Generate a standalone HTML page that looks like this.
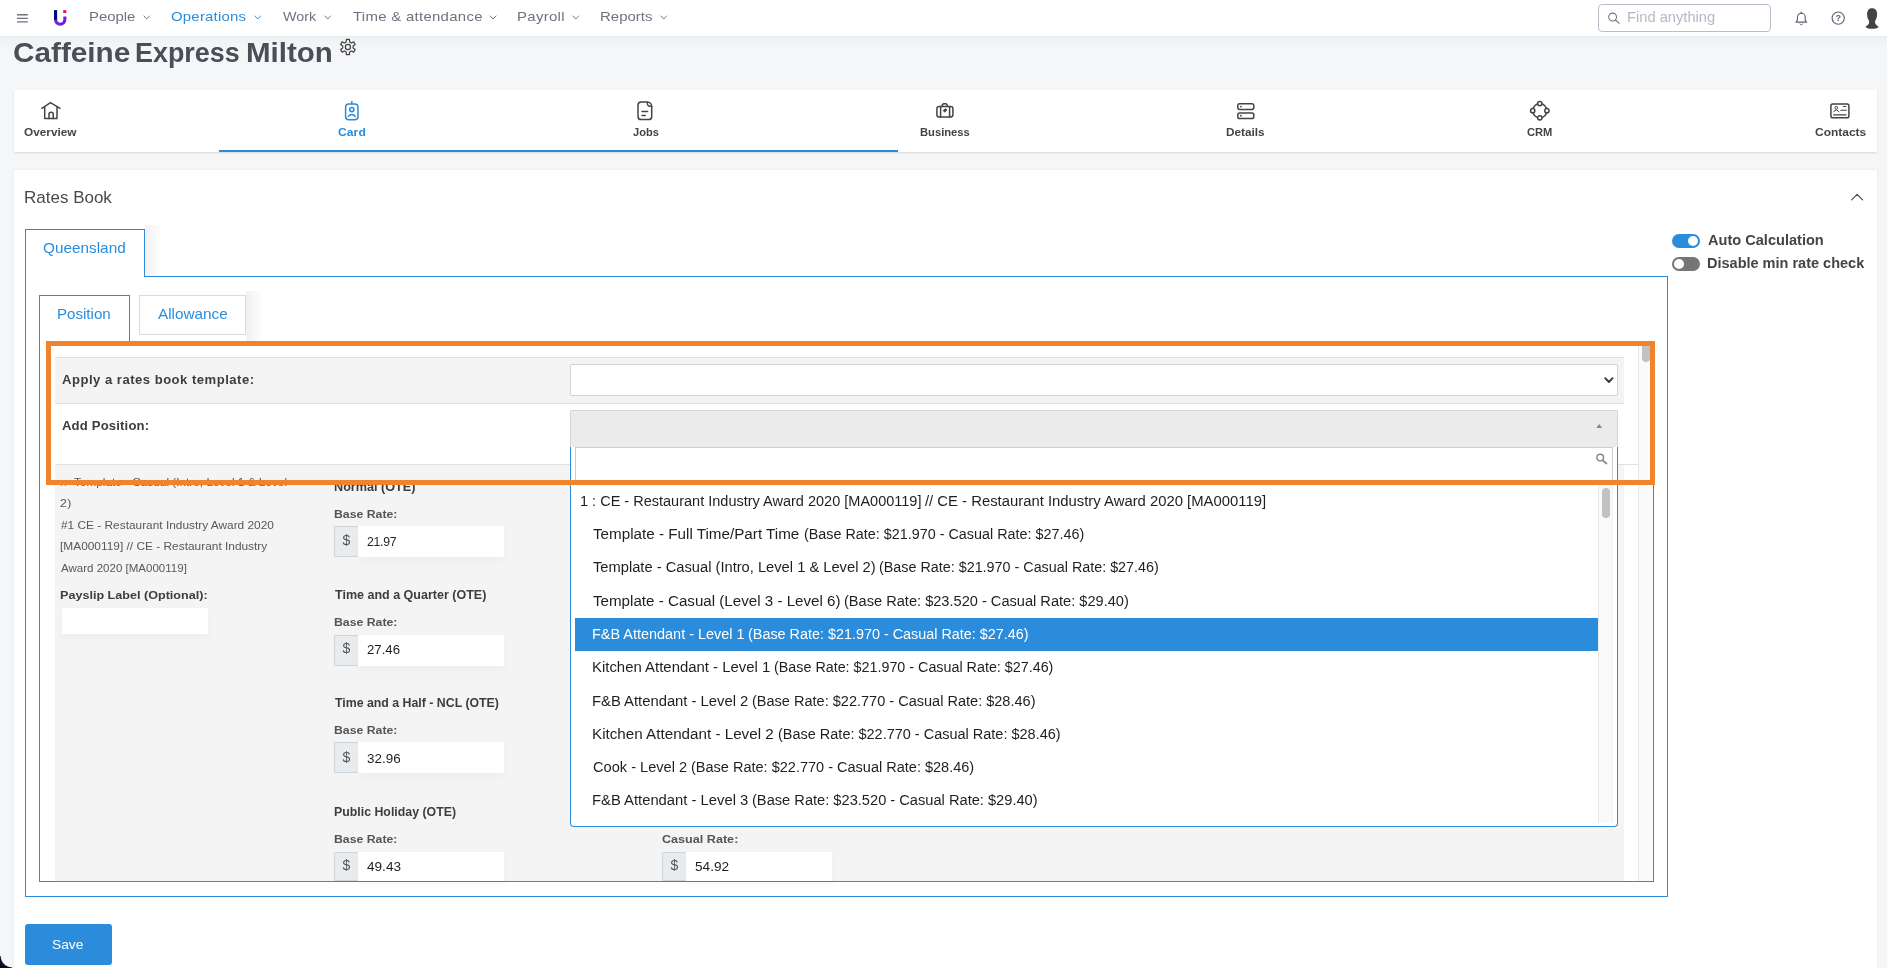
<!DOCTYPE html><html lang="en"><head><meta charset="utf-8"><title>Caffeine Express Milton - Rates Book</title><style>
html,body{margin:0;padding:0;width:1887px;height:968px;overflow:hidden}
body{width:1887px;height:968px;overflow:hidden;position:relative;background:#f5f6f8;font-family:"Liberation Sans",sans-serif;}
#app{position:absolute;left:0;top:0;width:1887px;height:968px;overflow:hidden;will-change:transform}
.a{position:absolute}
.t{position:absolute;white-space:nowrap;line-height:1;font-weight:400;transform-origin:0 0}
.nav{background:#fff;border-bottom:1px solid #e7edef;box-sizing:content-box}
.search{border:1px solid #b9bdc9;border-radius:4px;background:#fff;box-sizing:border-box}
.tabcard{background:#fff;box-shadow:0 1px 2px rgba(0,0,0,.12)}
.card{background:#fff;box-shadow:0 0 2px rgba(0,0,0,.08)}
.tog{width:28px;height:14px;border-radius:7px}
.tog i{position:absolute;top:1.8px;width:10.4px;height:10.4px;border-radius:50%;background:#fff}
.inp{background:#fff;box-shadow:0 4px 8px rgba(0,0,0,.03)}
.addon{background:#e9ecef;border:1px solid #ced4da;border-right:none;border-radius:2px 0 0 2px;box-sizing:border-box}
</style></head><body><div id="app"><div class="a" style="left:0;top:37px;width:1887px;height:12px;background:linear-gradient(#eef1f3,#f5f6f8)"></div>
<nav class="a nav" style="left:0;top:0;width:1887px;height:36px"><svg class="a" style="left:15px;top:12px" width="16" height="13" viewBox="15 12 16 13" ><path d="M17 14.7H27.8M17 18.3H27.8M17 21.9H27.8" stroke="#6b7280" stroke-width="1.35" fill="none"/></svg><svg class="a" style="left:52px;top:8px" width="18" height="20" viewBox="52 8 18 20" ><path d="M55.55 16 V19.6 A4.65 4.65 0 0 0 64.85 19.6 V16.5" fill="none" stroke="#6a22e0" stroke-width="3.1"/><rect x="54" y="10.1" width="3.1" height="9.6" fill="#05057a"/><rect x="63.2" y="10.1" width="3.1" height="2.9" fill="#e3126f"/></svg><span class="t" id="t0" style="left:89.28px;top:10.00px;font-size:13.6px;color:#6b7280;transform:scaleX(1.0958);">People</span><svg class="a" style="left:142px;top:14px" width="9.5" height="7" viewBox="142 14 9.5 7" ><path d="M144 16 L146.75 19 L149.5 16" fill="none" stroke="#6b7280" stroke-width="0.95" stroke-linecap="round" stroke-linejoin="round"/></svg><span class="t" id="t1" style="left:171.29px;top:10.00px;font-size:13.6px;color:#2a8cdb;letter-spacing:0.187px;transform:scaleX(1.1000);">Operations</span><svg class="a" style="left:253px;top:14px" width="9.5" height="7" viewBox="253 14 9.5 7" ><path d="M255 16 L257.75 19 L260.5 16" fill="none" stroke="#2a8cdb" stroke-width="0.95" stroke-linecap="round" stroke-linejoin="round"/></svg><span class="t" id="t2" style="left:282.94px;top:10.00px;font-size:13.6px;color:#6b7280;transform:scaleX(1.0500);">Work</span><svg class="a" style="left:322.75px;top:14px" width="9.5" height="7" viewBox="322.75 14 9.5 7" ><path d="M324.75 16 L327.5 19 L330.25 16" fill="none" stroke="#6b7280" stroke-width="0.95" stroke-linecap="round" stroke-linejoin="round"/></svg><span class="t" id="t3" style="left:352.66px;top:10.00px;font-size:13.6px;color:#6b7280;letter-spacing:0.257px;transform:scaleX(1.1000);">Time &amp; attendance</span><svg class="a" style="left:488px;top:14px" width="10" height="7" viewBox="488 14 10 7" ><path d="M490 16 L493 19 L496 16" fill="none" stroke="#6b7280" stroke-width="0.95" stroke-linecap="round" stroke-linejoin="round"/></svg><span class="t" id="t4" style="left:517.27px;top:10.00px;font-size:13.6px;color:#6b7280;letter-spacing:0.274px;transform:scaleX(1.1000);">Payroll</span><svg class="a" style="left:571px;top:14px" width="9.6" height="7" viewBox="571 14 9.6 7" ><path d="M573 16 L575.8 19 L578.6 16" fill="none" stroke="#6b7280" stroke-width="0.95" stroke-linecap="round" stroke-linejoin="round"/></svg><span class="t" id="t5" style="left:599.77px;top:10.00px;font-size:13.6px;color:#6b7280;letter-spacing:0.015px;transform:scaleX(1.1000);">Reports</span><svg class="a" style="left:659px;top:14px" width="9.5" height="7" viewBox="659 14 9.5 7" ><path d="M661 16 L663.75 19 L666.5 16" fill="none" stroke="#6b7280" stroke-width="0.95" stroke-linecap="round" stroke-linejoin="round"/></svg><div class="a search" style="left:1598px;top:4px;width:173px;height:28px"></div><svg class="a" style="left:1606px;top:10px" width="16" height="16" viewBox="1606 10 16 16" ><circle cx="1612.6" cy="17" r="3.9" fill="none" stroke="#6b7280" stroke-width="1.05"/><path d="M1615.5 20 L1619.2 23.3" stroke="#6b7280" stroke-width="1.1" stroke-linecap="round"/></svg><span class="t" id="t6" style="left:1626.80px;top:10.00px;font-size:14px;color:#b4b8c5;transform:scaleX(1.0486);">Find anything</span><svg class="a" style="left:1793px;top:9px" width="16" height="18" viewBox="1793 9 16 18" ><path d="M1796 22.1 H1806.6 L1805.2 20.2 V17.2 A3.9 3.9 0 0 0 1797.4 17.2 V20.2 Z" fill="none" stroke="#5a6472" stroke-width="1.1" stroke-linejoin="round"/><path d="M1801.3 13.3 V12.2" stroke="#5a6472" stroke-width="1.2" stroke-linecap="round"/><path d="M1799.8 23.6 A1.6 1.6 0 0 0 1802.8 23.6" fill="none" stroke="#5a6472" stroke-width="1"/></svg><svg class="a" style="left:1829px;top:9px" width="18" height="18" viewBox="1829 9 18 18" ><circle cx="1838.2" cy="18.1" r="6.1" fill="none" stroke="#5a6472" stroke-width="1.1"/><text x="1838.2" y="21.4" font-size="9" font-weight="700" text-anchor="middle" fill="#5a6472" font-family="Liberation Sans, sans-serif">?</text></svg><svg class="a" style="left:1862px;top:6px" width="20" height="25" viewBox="1862 6 20 25" ><path d="M1872 8.3 C1875.6 8.3 1877.3 11 1877.1 14.6 C1877 17.6 1876.2 19.6 1875.1 20.9 C1874.9 22.6 1875.3 24 1876.6 25.2 C1877.4 25.9 1878.4 26.3 1878.8 26.9 C1877.5 28.2 1874.8 28.8 1872 28.8 C1869.4 28.8 1866.8 28.2 1865.4 26.9 C1865.9 26.2 1867 25.8 1867.8 25 C1869 23.9 1869.3 22.6 1869.1 20.9 C1867.9 19.5 1867.2 17.4 1867.1 14.6 C1867 11 1868.6 8.3 1872 8.3 Z" fill="#424347"/></svg></nav>
<h1 class="a" style="left:0;top:0;margin:0;font-size:inherit"><span class="t" id="t7" style="left:13.03px;top:39.00px;font-size:27.2px;color:#4a4f57;font-weight:700;transform:scaleX(1.0929);">Caffeine</span> <span class="t" id="t8" style="left:135.20px;top:39.00px;font-size:27.2px;color:#4a4f57;font-weight:700;transform:scaleX(0.9890);">Express</span> <span class="t" id="t9" style="left:245.53px;top:39.00px;font-size:27.2px;color:#4a4f57;font-weight:700;transform:scaleX(1.0846);">Milton</span></h1>
<svg class="a" style="left:338px;top:37px" width="20" height="20" viewBox="338 37 20 20" ><path d="M346.18 41.99 L346.37 39.45 L349.43 39.45 L349.62 41.99 L351.38 43.01 L353.67 41.90 L355.20 44.55 L353.10 45.98 L353.10 48.02 L355.20 49.45 L353.67 52.10 L351.38 50.99 L349.62 52.01 L349.43 54.55 L346.37 54.55 L346.18 52.01 L344.42 50.99 L342.13 52.10 L340.60 49.45 L342.70 48.02 L342.70 45.98 L340.60 44.55 L342.13 41.90 L344.42 43.01 Z" fill="none" stroke="#444" stroke-width="1.25" stroke-linejoin="round"/><circle cx="347.9" cy="47" r="2.55" fill="none" stroke="#444" stroke-width="1.25"/></svg>
<div class="a tabcard" style="left:14px;top:90px;width:1863px;height:62px"></div>
<div class="a" style="left:219px;top:150px;width:679px;height:2px;background:#2a8cdb"></div>
<div class="a" style="left:0;top:0"><svg class="a" style="left:39px;top:100px" width="24" height="22" viewBox="39 100 24 22" ><path d="M41.8 108.3 L50.5 102.6 L60 108.3" fill="none" stroke="#444" stroke-width="1.5" stroke-linejoin="round" stroke-linecap="round"/><path d="M44.7 107 V118.6 H57 V107" fill="none" stroke="#444" stroke-width="1.5" stroke-linejoin="round" stroke-linecap="round"/><path d="M49 118.6 V114.3 A2.1 2.1 0 0 1 53.2 114.3 V118.6" fill="none" stroke="#444" stroke-width="1.5" stroke-linejoin="round" stroke-linecap="round"/></svg><span class="t" id="t10" style="left:24.17px;top:127.00px;font-size:11px;color:#444;font-weight:700;transform:scaleX(1.0734);">Overview</span><svg class="a" style="left:342px;top:99px" width="20" height="24" viewBox="342 99 20 24" ><rect x="345.6" y="104" width="12.4" height="15.7" rx="3.2" fill="none" stroke="#2a8cdb" stroke-width="1.5" stroke-linejoin="round" stroke-linecap="round"/><path d="M351.8 101.5 V104" fill="none" stroke="#2a8cdb" stroke-width="1.5" stroke-linejoin="round" stroke-linecap="round"/><circle cx="351.8" cy="109.6" r="2.1" fill="none" stroke="#2a8cdb" stroke-width="1.5" stroke-linejoin="round" stroke-linecap="round"/><path d="M348.4 116.4 A4 4 0 0 1 355.2 116.4" fill="none" stroke="#2a8cdb" stroke-width="1.5" stroke-linejoin="round" stroke-linecap="round"/></svg><span class="t" id="t11" style="left:337.90px;top:127.00px;font-size:11px;color:#2a8cdb;font-weight:700;letter-spacing:0.068px;transform:scaleX(1.1000);">Card</span><svg class="a" style="left:635px;top:99px" width="20" height="24" viewBox="635 99 20 24" ><path d="M641 102 H647.2 A4.5 4.5 0 0 1 651.7 106.5 V116.4 A3.2 3.2 0 0 1 648.5 119.6 H641.2 A3.2 3.2 0 0 1 638 116.4 V105.2 A3.2 3.2 0 0 1 641 102 Z" fill="none" stroke="#444" stroke-width="1.5" stroke-linejoin="round" stroke-linecap="round"/><path d="M647.4 102.2 V103.8 A2.4 2.4 0 0 0 649.8 106.2 H651.6" fill="none" stroke="#444" stroke-width="1.5" stroke-linejoin="round" stroke-linecap="round"/><path d="M642 111.5 H647.6 M642 115.4 H645.2" fill="none" stroke="#444" stroke-width="1.5" stroke-linejoin="round" stroke-linecap="round"/></svg><span class="t" id="t12" style="left:632.53px;top:127.00px;font-size:11px;color:#444;font-weight:700;transform:scaleX(1.0092);">Jobs</span><svg class="a" style="left:934px;top:100px" width="22" height="20" viewBox="934 100 22 20" ><rect x="936.9" y="106.6" width="16" height="10.4" rx="2.2" fill="none" stroke="#444" stroke-width="1.5" stroke-linejoin="round" stroke-linecap="round"/><path d="M941.8 106.4 L942.6 104.6 A1.4 1.4 0 0 1 943.9 103.8 H945.6 A1.4 1.4 0 0 1 946.9 104.6 L947.6 106.4" fill="none" stroke="#444" stroke-width="1.5" stroke-linejoin="round" stroke-linecap="round"/><path d="M940.6 106.8 V117 M949.6 106.8 V117" fill="none" stroke="#444" stroke-width="1.5" stroke-linejoin="round" stroke-linecap="round"/><path d="M943.2 110.6 L945.6 108.6 L947 110 L944.6 112.2 Z" fill="#444" stroke="#444" stroke-width="0.8" stroke-linejoin="round"/></svg><span class="t" id="t13" style="left:919.85px;top:127.00px;font-size:11px;color:#444;font-weight:700;transform:scaleX(1.0181);">Business</span><svg class="a" style="left:1235px;top:100px" width="22" height="22" viewBox="1235 100 22 22" ><rect x="1237.8" y="103.8" width="16" height="5.6" rx="1.8" fill="none" stroke="#444" stroke-width="1.5" stroke-linejoin="round" stroke-linecap="round"/><rect x="1237.8" y="112.9" width="16" height="5.6" rx="1.8" fill="none" stroke="#444" stroke-width="1.5" stroke-linejoin="round" stroke-linecap="round"/><circle cx="1240.9" cy="106.6" r="0.9" fill="#444"/><circle cx="1240.9" cy="115.7" r="0.9" fill="#444"/></svg><span class="t" id="t14" style="left:1226.21px;top:127.00px;font-size:11px;color:#444;font-weight:700;transform:scaleX(1.0690);">Details</span><svg class="a" style="left:1527px;top:98px" width="26" height="26" viewBox="1527 98 26 26" ><circle cx="1539.8" cy="110.7" r="7.1" fill="none" stroke="#444" stroke-width="1.5" stroke-linejoin="round" stroke-linecap="round"/><g fill="#fff" stroke="#444" stroke-width="1.5"><circle cx="1539.8" cy="103.6" r="2.15"/><circle cx="1539.8" cy="117.8" r="2.15"/><circle cx="1532.7" cy="110.7" r="2.15"/><circle cx="1546.9" cy="110.7" r="2.15"/></g></svg><span class="t" id="t15" style="left:1527.44px;top:127.00px;font-size:11px;color:#444;font-weight:700;transform:scaleX(1.0136);">CRM</span><svg class="a" style="left:1828px;top:100px" width="24" height="22" viewBox="1828 100 24 22" ><rect x="1830.9" y="104" width="18" height="13.8" rx="1.8" fill="none" stroke="#444" stroke-width="1.5" stroke-linejoin="round" stroke-linecap="round"/><circle cx="1836.3" cy="107.8" r="1.4" fill="none" stroke="#444" stroke-width="1"/><path d="M1833.7 111.8 A2.8 2.8 0 0 1 1838.9 111.8" fill="none" stroke="#444" stroke-width="1" stroke-linecap="round"/><path d="M1843.4 106.5 H1846 M1840.8 110.3 H1846.4" stroke="#444" stroke-width="1.1" stroke-linecap="round"/><path d="M1833.6 114.8 H1846" stroke="#444" stroke-width="1.3" stroke-linecap="round"/></svg><span class="t" id="t16" style="left:1814.61px;top:127.00px;font-size:11px;color:#444;font-weight:700;transform:scaleX(1.0875);">Contacts</span></div>
<section class="a card" style="left:14px;top:170px;width:1863px;height:798px"></section>
<span class="t" id="t17" style="left:23.60px;top:190.00px;font-size:16.8px;color:#4a4a4a;transform:scaleX(1.0129);">Rates Book</span>
<svg class="a" style="left:1849px;top:191px" width="16" height="12" viewBox="1849 191 16 12" ><path d="M1851.6 199.8 L1857.1 194.3 L1862.6 199.8" fill="none" stroke="#444" stroke-width="1.1" stroke-linecap="round" stroke-linejoin="round"/></svg>
<div class="a tog" style="left:1672px;top:234px;background:#2a8cdb"><i style="left:16px"></i></div>
<span class="t" id="t18" style="left:1707.89px;top:233.00px;font-size:14px;color:#444;font-weight:700;transform:scaleX(1.0407);">Auto Calculation</span>
<div class="a tog" style="left:1672px;top:257px;background:#757575"><i style="left:1.5px"></i></div>
<span class="t" id="t19" style="left:1707.28px;top:256.00px;font-size:14px;color:#444;font-weight:700;transform:scaleX(1.0360);">Disable min rate check</span>
<div class="a" style="left:145px;top:225px;width:18px;height:51px;background:linear-gradient(90deg,#f1f1f4,#fff)"></div>
<div class="a" style="left:25px;top:276px;width:1643px;height:621px;border:1px solid #2a8cdb;box-sizing:border-box"></div>
<div class="a" style="left:25px;top:229px;width:120px;height:48px;border:1px solid #2a8cdb;border-bottom:none;background:#fff;box-sizing:border-box"></div>
<span class="t" id="t20" style="left:43.27px;top:241.00px;font-size:14.2px;color:#2a8cdb;transform:scaleX(1.0810);">Queensland</span>
<div class="a" style="left:246px;top:291px;width:18px;height:50px;background:linear-gradient(90deg,#f1f1f4,#fff)"></div>
<div class="a" style="left:139px;top:295px;width:107px;height:40px;border:1px solid #dcdcdc;box-sizing:border-box"></div>
<span class="t" id="t21" style="left:157.97px;top:307.00px;font-size:14.2px;color:#2a8cdb;transform:scaleX(1.0779);">Allowance</span>
<div class="a" style="left:39px;top:341px;width:1615px;height:541px;border:1px solid #2a8cdb;box-sizing:border-box;background:#fff"></div>
<div class="a" style="left:39px;top:295px;width:91px;height:47px;border:1px solid #2a8cdb;border-bottom:none;background:#fff;box-sizing:border-box"></div>
<span class="t" id="t22" style="left:57.26px;top:307.00px;font-size:14.2px;color:#2a8cdb;transform:scaleX(1.0641);">Position</span>
<div class="a" style="left:1638px;top:342px;width:15px;height:539px;background:#fafafa;border-left:1px solid #e8e8e8;box-sizing:border-box"></div>
<div class="a" style="left:1642px;top:344px;width:8px;height:18px;border-radius:4px;background:#c1c1c1"></div>
<div class="a" style="left:55px;top:357px;width:1569px;height:46px;background:#f4f4f4;border-top:1px solid #dee2e6;box-sizing:border-box"></div>
<div class="a" style="left:55px;top:403px;width:1569px;height:61px;background:#fff;border-top:1px solid #dee2e6;box-sizing:border-box"></div>
<div class="a" style="left:55px;top:464px;width:1569px;height:417px;background:#f4f4f4;border-top:1px solid #dee2e6;box-sizing:border-box"></div>
<div class="a" style="left:1624px;top:464px;width:14px;height:1px;background:#dee2e6"></div>
<span class="t" id="t23" style="left:62.17px;top:375.00px;font-size:11.9px;color:#3d3d3d;font-weight:700;letter-spacing:0.447px;transform:scaleX(1.1000);">Apply a rates book template:</span>
<span class="t" id="t24" style="left:62.17px;top:421.00px;font-size:11.9px;color:#3d3d3d;font-weight:700;letter-spacing:0.157px;transform:scaleX(1.1000);">Add Position:</span>
<div class="a" style="left:570px;top:364px;width:1048px;height:32px;border:1px solid #ced4da;border-radius:2px;background:#fff;box-sizing:border-box"></div>
<svg class="a" style="left:1602px;top:375px" width="14" height="11" viewBox="1602 375 14 11" ><path d="M1605.2 378.2 L1608.9 382 L1612.6 378.2" fill="none" stroke="#343a40" stroke-width="1.9" stroke-linecap="round" stroke-linejoin="round"/></svg>
<div class="a" style="left:570px;top:410px;width:1048px;height:37px;border:1px solid #d3d6d3;border-bottom:none;border-radius:2px 2px 0 0;background:#ebebeb;box-sizing:border-box"></div>
<svg class="a" style="left:1595px;top:423px" width="9" height="6" viewBox="1595 423 9 6" ><path d="M1596.3 428 L1599.2 424.1 L1602.1 428 Z" fill="#888"/></svg>
<svg class="a" style="left:60px;top:479px" width="8" height="8" viewBox="60 479 8 8" ><path d="M61 480.5 L66 485.5 M66 480.5 L61 485.5" stroke="#2a8cdb" stroke-width="1.4"/></svg>
<span class="t" id="t25" style="left:74.23px;top:477.00px;font-size:11.2px;color:#585858;transform:scaleX(1.0542);">Template - Casual (Intro, Level 1 &amp; Level</span>
<span class="t" id="t26" style="left:59.98px;top:498.00px;font-size:11.2px;color:#585858;letter-spacing:0.305px;transform:scaleX(1.1000);">2)</span>
<span class="t" id="t27" style="left:60.55px;top:520.00px;font-size:11.2px;color:#585858;transform:scaleX(1.0610);">#1 CE - Restaurant Industry Award 2020</span>
<span class="t" id="t28" style="left:59.75px;top:541.00px;font-size:11.2px;color:#585858;transform:scaleX(1.0627);">[MA000119] // CE - Restaurant Industry</span>
<span class="t" id="t29" style="left:60.58px;top:563.00px;font-size:11.2px;color:#585858;transform:scaleX(1.0305);">Award 2020 [MA000119]</span>
<span class="t" id="t30" style="left:59.76px;top:589.00px;font-size:11.6px;color:#3d3d3d;font-weight:700;transform:scaleX(1.0863);">Payslip Label (Optional):</span>
<div class="a inp" style="left:62px;top:608px;width:146px;height:26px"></div>
<span class="t" id="t31" style="left:334.15px;top:481.00px;font-size:12.3px;color:#3d3d3d;font-weight:700;transform:scaleX(1.0279);">Normal (OTE)</span><span class="t" id="t32" style="left:334.18px;top:508.00px;font-size:11.6px;color:#555;font-weight:700;transform:scaleX(1.0578);">Base Rate:</span><div class="a addon" style="left:334.4px;top:526px;width:23.5px;height:31px"></div><div class="a inp" style="left:357.9px;top:526px;width:146.5px;height:31px"></div><span class="t" id="t33" style="left:342.45px;top:533.00px;font-size:14px;color:#555;">$</span><span class="t" id="t34" style="left:366.98px;top:535.00px;font-size:13.3px;color:#1f1f1f;letter-spacing:-0.268px;transform:scaleX(0.9200);">21.97</span>
<span class="t" id="t35" style="left:334.86px;top:589.00px;font-size:12.3px;color:#3d3d3d;font-weight:700;transform:scaleX(1.0177);">Time and a Quarter (OTE)</span><span class="t" id="t36" style="left:334.18px;top:616.00px;font-size:11.6px;color:#555;font-weight:700;transform:scaleX(1.0578);">Base Rate:</span><div class="a addon" style="left:334.4px;top:634.5px;width:23.5px;height:31px"></div><div class="a inp" style="left:357.9px;top:634.5px;width:146.5px;height:31px"></div><span class="t" id="t37" style="left:342.45px;top:641.00px;font-size:14px;color:#555;">$</span><span class="t" id="t38" style="left:366.94px;top:643.00px;font-size:13.3px;color:#1f1f1f;transform:scaleX(0.9929);">27.46</span>
<span class="t" id="t39" style="left:334.86px;top:697.00px;font-size:12.3px;color:#3d3d3d;font-weight:700;transform:scaleX(1.0026);">Time and a Half - NCL (OTE)</span><span class="t" id="t40" style="left:334.18px;top:724.00px;font-size:11.6px;color:#555;font-weight:700;transform:scaleX(1.0578);">Base Rate:</span><div class="a addon" style="left:334.4px;top:742.4px;width:23.5px;height:31px"></div><div class="a inp" style="left:357.9px;top:742.4px;width:146.5px;height:31px"></div><span class="t" id="t41" style="left:342.45px;top:750.00px;font-size:14px;color:#555;">$</span><span class="t" id="t42" style="left:367.09px;top:752.00px;font-size:13.3px;color:#1f1f1f;transform:scaleX(1.0127);">32.96</span>
<span class="t" id="t43" style="left:334.17px;top:806.00px;font-size:12.3px;color:#3d3d3d;font-weight:700;transform:scaleX(1.0034);">Public Holiday (OTE)</span><span class="t" id="t44" style="left:334.18px;top:833.00px;font-size:11.6px;color:#555;font-weight:700;transform:scaleX(1.0578);">Base Rate:</span><div class="a addon" style="left:334.4px;top:851.5px;width:23.5px;height:29.5px"></div><div class="a inp" style="left:357.9px;top:851.5px;width:146.5px;height:29.5px"></div><span class="t" id="t45" style="left:342.45px;top:858.00px;font-size:14px;color:#555;">$</span><span class="t" id="t46" style="left:367.29px;top:860.00px;font-size:13.3px;color:#1f1f1f;transform:scaleX(1.0219);">49.43</span>
<span class="t" id="t47" style="left:662.48px;top:833.00px;font-size:11.6px;color:#555;font-weight:700;transform:scaleX(1.0868);">Casual Rate:</span><div class="a addon" style="left:662.4px;top:851.5px;width:23.5px;height:29.5px"></div><div class="a inp" style="left:685.9px;top:851.5px;width:146.5px;height:29.5px"></div><span class="t" id="t48" style="left:670.45px;top:858.00px;font-size:14px;color:#555;">$</span><span class="t" id="t49" style="left:695.05px;top:860.00px;font-size:13.3px;color:#1f1f1f;transform:scaleX(1.0256);">54.92</span>
<div class="a" style="left:570px;top:447px;width:1048px;height:380px;background:#fff;border:1px solid #2a8cdb;border-top:none;border-radius:0 0 4px 4px;box-sizing:border-box"></div>
<div class="a" style="left:575px;top:447px;width:1038px;height:34px;border:1px solid #c9cfcc;box-sizing:border-box;background:#fff"></div>
<svg class="a" style="left:1594px;top:451px" width="16" height="16" viewBox="1594 451 16 16" ><circle cx="1600.2" cy="457.6" r="3.3" fill="none" stroke="#8a8a8a" stroke-width="1.5"/><path d="M1602.8 460.4 L1606.4 463.5" stroke="#8a8a8a" stroke-width="1.9" stroke-linecap="round"/></svg>
<div class="a" style="left:1598px;top:485px;width:15px;height:338px;background:#fafafa;border-left:1px solid #e8e8e8;border-right:1px solid #f0f0f0;box-sizing:border-box"></div>
<div class="a" style="left:1602px;top:488px;width:8px;height:30px;border-radius:4px;background:#c1c1c1"></div>
<div class="a" style="left:575px;top:617.8px;width:1023px;height:33.7px;background:#2a8cdb"></div>
<ul class="a" style="left:0;top:0;margin:0;padding:0;list-style:none"><li><span class="t" id="t50" style="left:579.59px;top:494.00px;font-size:14px;color:#1f1f1f;transform:scaleX(1.0364);">1 : CE - Restaurant Industry Award 2020 [MA000119]</span> <span class="t" id="t51" style="left:925.30px;top:494.00px;font-size:14px;color:#1f1f1f;transform:scaleX(1.0603);">// CE - Restaurant Industry Award 2020 [MA000119]</span></li><li><span class="t" id="t52" style="left:593.06px;top:527.00px;font-size:14px;color:#1f1f1f;transform:scaleX(1.0869);">Template - Full Time/Part Time</span> <span class="t" id="t53" style="left:804.11px;top:527.00px;font-size:14px;color:#1f1f1f;transform:scaleX(1.0257);">(Base Rate: $21.970 - Casual Rate: $27.46)</span></li><li><span class="t" id="t54" style="left:593.07px;top:560.00px;font-size:14px;color:#1f1f1f;transform:scaleX(1.0494);">Template - Casual (Intro, Level 1 &amp; Level 2)</span> <span class="t" id="t55" style="left:879.31px;top:560.00px;font-size:14px;color:#1f1f1f;transform:scaleX(1.0242);">(Base Rate: $21.970 - Casual Rate: $27.46)</span></li><li><span class="t" id="t56" style="left:593.06px;top:594.00px;font-size:14px;color:#1f1f1f;transform:scaleX(1.0822);">Template - Casual (Level 3 - Level 6)</span> <span class="t" id="t57" style="left:844.39px;top:594.00px;font-size:14px;color:#1f1f1f;transform:scaleX(1.0426);">(Base Rate: $23.520 - Casual Rate: $29.40)</span></li><li><span class="t" id="t58" style="left:592.21px;top:627.00px;font-size:14px;color:#fff;transform:scaleX(1.0319);">F&amp;B Attendant - Level 1</span> <span class="t" id="t59" style="left:748.21px;top:627.00px;font-size:14px;color:#fff;transform:scaleX(1.0271);">(Base Rate: $21.970 - Casual Rate: $27.46)</span></li><li><span class="t" id="t60" style="left:592.18px;top:660.00px;font-size:14px;color:#1f1f1f;transform:scaleX(1.0658);">Kitchen Attendant - Level 1</span> <span class="t" id="t61" style="left:774.31px;top:660.00px;font-size:14px;color:#1f1f1f;transform:scaleX(1.0227);">(Base Rate: $21.970 - Casual Rate: $27.46)</span></li><li><span class="t" id="t62" style="left:592.19px;top:694.00px;font-size:14px;color:#1f1f1f;transform:scaleX(1.0574);">F&amp;B Attendant - Level 2</span> <span class="t" id="t63" style="left:752.30px;top:694.00px;font-size:14px;color:#1f1f1f;transform:scaleX(1.0378);">(Base Rate: $22.770 - Casual Rate: $28.46)</span></li><li><span class="t" id="t64" style="left:592.15px;top:727.00px;font-size:14px;color:#1f1f1f;transform:scaleX(1.0859);">Kitchen Attendant - Level 2</span> <span class="t" id="t65" style="left:777.80px;top:727.00px;font-size:14px;color:#1f1f1f;transform:scaleX(1.0345);">(Base Rate: $22.770 - Casual Rate: $28.46)</span></li><li><span class="t" id="t66" style="left:592.66px;top:760.00px;font-size:14px;color:#1f1f1f;transform:scaleX(1.0431);">Cook - Level 2</span> <span class="t" id="t67" style="left:690.70px;top:760.00px;font-size:14px;color:#1f1f1f;transform:scaleX(1.0367);">(Base Rate: $22.770 - Casual Rate: $28.46)</span></li><li><span class="t" id="t68" style="left:592.19px;top:793.00px;font-size:14px;color:#1f1f1f;transform:scaleX(1.0567);">F&amp;B Attendant - Level 3</span> <span class="t" id="t69" style="left:752.29px;top:793.00px;font-size:14px;color:#1f1f1f;transform:scaleX(1.0456);">(Base Rate: $23.520 - Casual Rate: $29.40)</span></li></ul>
<div class="a" style="left:46px;top:341px;width:1609px;height:144px;border:5px solid #f0832c;box-sizing:border-box"></div>
<div class="a" style="left:25px;top:924px;width:87px;height:41px;background:#2a8cdb;border-radius:3px"></div>
<span class="t" id="t70" style="left:52.37px;top:938.00px;font-size:13.6px;color:#fff;transform:scaleX(1.0147);">Save</span>
<div class="a" style="left:0;top:956px;width:12px;height:12px;background:radial-gradient(circle at 100% 0,rgba(0,0,0,0) 10.8px,#0a0a28 11.8px)"></div></div></body></html>
